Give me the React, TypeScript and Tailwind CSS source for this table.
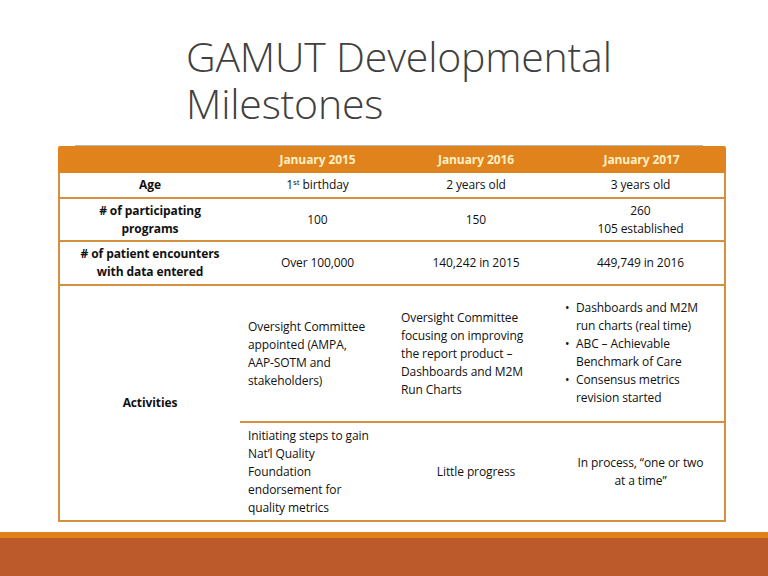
import React from "react";

const line = "border-b-2 border-[#d4903e]";

function Cell({
  children,
  className = "",
}: {
  children: React.ReactNode;
  className?: string;
}) {
  return (
    <div className={`flex items-center justify-center text-center ${line} ${className}`}>
      <div>{children}</div>
    </div>
  );
}

function Lines({ rows }: { rows: string[] }) {
  return (
    <>
      {rows.map((r, i) => (
        <div key={i} className="whitespace-nowrap">
          {r}
        </div>
      ))}
    </>
  );
}

export default function App() {
  return (
    <div
      className="w-[768px] h-[576px] bg-white flex flex-col overflow-hidden text-[#111]"
      style={{ fontFamily: '"Open Sans", "Liberation Sans", sans-serif' }}
    >
      {/* Title */}
      <div className="pl-[186px] pt-[33px] text-[41px] leading-[47px] font-light text-[#404040] tracking-[-0.2px]">
        <div>GAMUT Developmental</div>
        <div>Milestones</div>
      </div>

      {/* Table */}
      <div className="ml-[58px] mt-[18px] w-[668px] text-[12px] leading-[18px] tracking-[-0.1px]">
        <div className="ml-[17px] w-[628px] h-px bg-[#b8b8b8]" />
        <div className="grid grid-cols-[182px_155px_162px_169px] h-[27px] bg-[#e0831c] rounded-tl-[2px] rounded-tr-[2px] font-bold text-[#fff0c4]">
          <div />
          <div className="flex items-center justify-center">January 2015</div>
          <div className="flex items-center justify-center">January 2016</div>
          <div className="flex items-center justify-center">January 2017</div>
        </div>
        <div className="grid grid-cols-[180px_155px_162px_167px] grid-rows-[26px_43px_44px_137px_99px] border-x-2 border-[#d4903e]">
          <Cell className="font-bold">Age</Cell>
          <Cell>
            1<sup className="text-[8px]">st</sup> birthday
          </Cell>
          <Cell>2 years old</Cell>
          <Cell>3 years old</Cell>

          <Cell className="font-bold">
            <Lines rows={["# of participating", "programs"]} />
          </Cell>
          <Cell>100</Cell>
          <Cell>150</Cell>
          <Cell>
            <Lines rows={["260", "105 established"]} />
          </Cell>

          <Cell className="font-bold">
            <Lines rows={["# of patient encounters", "with data entered"]} />
          </Cell>
          <Cell>Over 100,000</Cell>
          <Cell>140,242 in 2015</Cell>
          <Cell>449,749 in 2016</Cell>

          <Cell className="row-span-2 font-bold">Activities</Cell>
          <div className={`flex items-center pl-[8px] ${line}`}>
            <div>
              <Lines
                rows={[
                  "Oversight Committee",
                  "appointed (AMPA,",
                  "AAP-SOTM and",
                  "stakeholders)",
                ]}
              />
            </div>
          </div>
          <div className={`flex items-center pl-[6px] ${line}`}>
            <div>
              <Lines
                rows={[
                  "Oversight Committee",
                  "focusing on improving",
                  "the report product \u2013",
                  "Dashboards and M2M",
                  "Run Charts",
                ]}
              />
            </div>
          </div>
          <div className={`flex items-center pl-[8px] ${line}`}>
            <ul className="pb-[2px]">
              {[
                ["Dashboards and M2M", "run charts (real time)"],
                ["ABC \u2013 Achievable", "Benchmark of Care"],
                ["Consensus metrics", "revision started"],
              ].map((b, i) => (
                <li key={i} className="flex">
                  <span className="w-[11px] shrink-0">•</span>
                  <div>
                    <Lines rows={b} />
                  </div>
                </li>
              ))}
            </ul>
          </div>

          <div className={`flex items-center pl-[8px] ${line}`}>
            <div>
              <Lines
                rows={[
                  "Initiating steps to gain",
                  "Nat\u2019l Quality",
                  "Foundation",
                  "endorsement for",
                  "quality metrics",
                ]}
              />
            </div>
          </div>
          <Cell>Little progress</Cell>
          <Cell>
            <Lines rows={["In process, \u201cone or two", "at a time\u201d"]} />
          </Cell>
        </div>
      </div>

      {/* Bottom bars */}
      <div className="mt-auto">
        <div className="h-[6px] bg-[#e0821c]" />
        <div className="h-[38px] bg-[#bd5a2c]" />
      </div>
    </div>
  );
}
